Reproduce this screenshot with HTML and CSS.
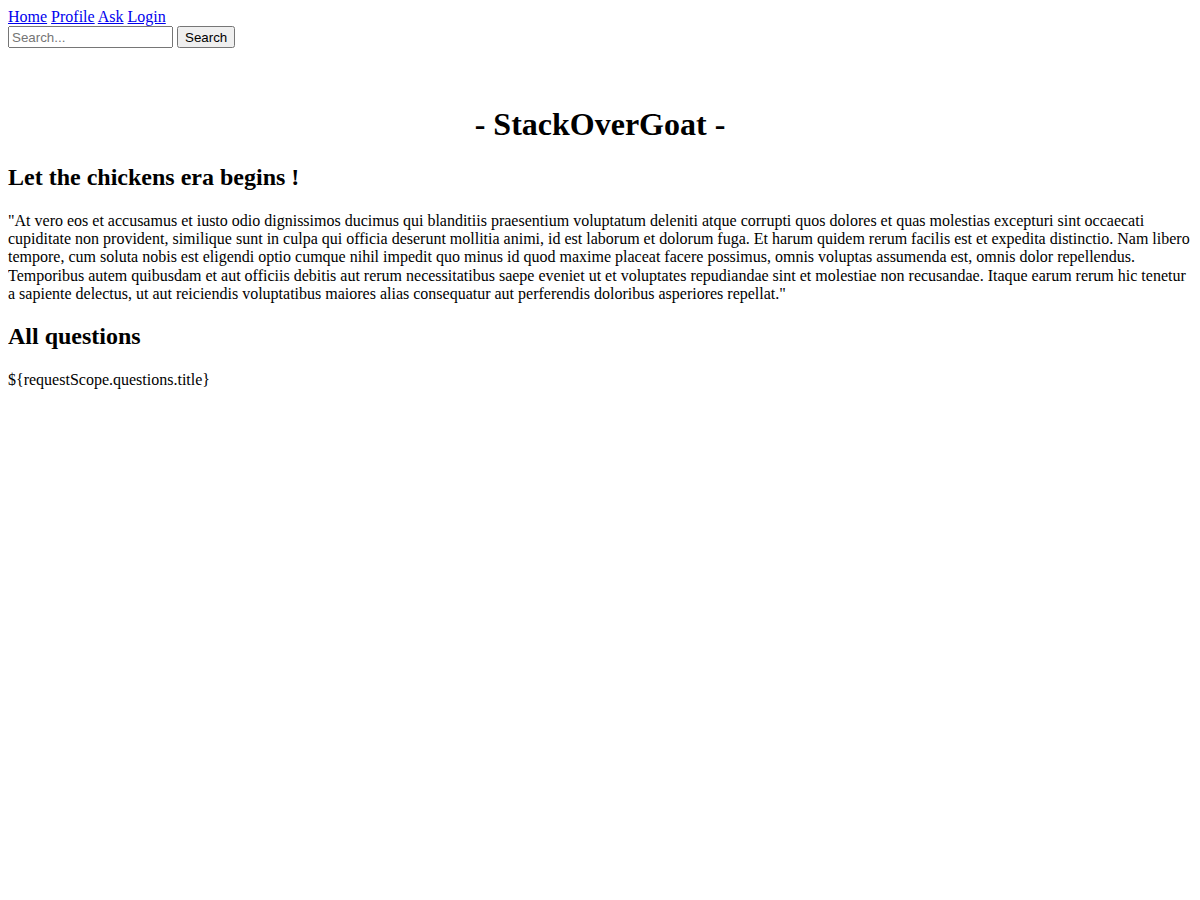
FILE: index.html
```html
<!DOCTYPE html>
<html lang="en">
<head>
<meta charset="utf-8">
<title>StackOverGoat</title>
<link rel="stylesheet" href="styles.css">
</head>
<body class="page">
<header class="site-header">
  <nav class="nav">
    <a href="#" class="nav-link">Home</a>
    <a href="#" class="nav-link">Profile</a>
    <a href="#" class="nav-link">Ask</a>
    <a href="#" class="nav-link">Login</a>
  </nav>
  <form class="search-form">
    <input type="text" class="search-input" placeholder="Search...">
    <button type="button" class="search-button">Search</button>
  </form>
</header>
<main class="content">
  <h1 class="site-title">- StackOverGoat -</h1>
  <h2 class="section-title">Let the chickens era begins !</h2>
  <p class="intro">"At vero eos et accusamus et iusto odio dignissimos ducimus qui blanditiis praesentium voluptatum deleniti atque corrupti quos dolores et quas molestias excepturi sint occaecati cupiditate non provident, similique sunt in culpa qui officia deserunt mollitia animi, id est laborum et dolorum fuga. Et harum quidem rerum facilis est et expedita distinctio. Nam libero tempore, cum soluta nobis est eligendi optio cumque nihil impedit quo minus id quod maxime placeat facere possimus, omnis voluptas assumenda est, omnis dolor repellendus. Temporibus autem quibusdam et aut officiis debitis aut rerum necessitatibus saepe eveniet ut et voluptates repudiandae sint et molestiae non recusandae. Itaque earum rerum hic tenetur a sapiente delectus, ut aut reiciendis voluptatibus maiores alias consequatur aut perferendis doloribus asperiores repellat."</p>
  <h2 class="section-title">All questions</h2>
  <p class="question">${requestScope.questions.title}</p>
</main>
</body>
</html>
```
FILE: styles.css
```css
.page {
  margin: 8px;
  font-family: "Liberation Serif", "Times New Roman", serif;
  font-size: 16px;
  line-height: 1.15;
  color: #000;
  background: #fff;
}
.nav-link {
  color: #0000ee;
  text-decoration: underline;
}
.search-form {
  margin: 0;
}
.search-input {
  box-sizing: border-box;
  width: 165px;
  height: 22px;
  padding: 1px 2px;
  font-family: "Liberation Sans", Arial, sans-serif;
  font-size: 13.333px;
  vertical-align: middle;
}
.search-button {
  box-sizing: border-box;
  height: 22px;
  font-family: "Liberation Sans", Arial, sans-serif;
  font-size: 13.333px;
  vertical-align: middle;
}
.content {
  padding-top: 36px;
}
.site-title {
  text-align: center;
  font-size: 2em;
  margin: 0.67em 0;
}
.section-title {
  font-size: 1.5em;
  margin: 0.83em 0;
}
.intro, .question {
  margin: 1em 0;
}
```
